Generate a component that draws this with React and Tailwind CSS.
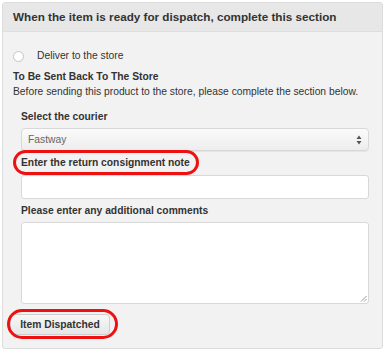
export default function App() {
  return (
    <div className="w-[385px] h-[351px] bg-white pt-[2px] pl-[2px]" style={{ fontFamily: '"Liberation Sans", Arial, sans-serif' }}>
      <div className="w-[381px] h-[347px] border border-[#dcdcdc] rounded-[3px] bg-[#f2f2f2] overflow-hidden flex flex-col">
        <div className="h-[29px] shrink-0 bg-[#e7e7e7] border-b border-[#dedede] flex items-center pl-[10px] text-[11.7px] font-bold text-[#333]">
          When the item is ready for dispatch, complete this section
        </div>
        <div className="flex flex-col pl-[10px] pr-[12px] text-[10.3px] text-[#333]">
          <div className="flex items-center mt-[17px] h-[14px]">
            <span className="w-[11px] h-[11px] rounded-full border border-[#c4c4c4] bg-white" />
            <span className="ml-[13px]">Deliver to the store</span>
          </div>
          <div className="font-bold mt-[7px] leading-[14px]">To Be Sent Back To The Store</div>
          <div className="leading-[14px] mt-[1px]">Before sending this product to the store, please complete the section below.</div>
          <div className="pl-[8px] flex flex-col">
            <div className="font-bold mt-[11px] leading-[14px]">Select the courier</div>
            <div className="mt-[4px] h-[23px] w-[348px] rounded-[4px] border border-[#d8d8d8] bg-gradient-to-b from-[#fbfbfb] to-[#ededed] shadow-[0_1px_1px_rgba(0,0,0,0.06)] flex items-center justify-between pl-[6px] pr-[6px] text-[#666]">
              <span>Fastway</span>
              <svg width="6" height="10" viewBox="0 0 6 10"><path d="M3 0.5 L5.5 4 H0.5 Z M3 9.5 L5.5 6 H0.5 Z" fill="#555" /></svg>
            </div>
            <div className="relative mt-[5px] leading-[14px] h-[14px]">
              <span className="font-bold">Enter the return consignment note</span>
              <div className="absolute left-[-8px] top-[-6px] w-[186px] h-[25px] rounded-full border-[3px] border-[#ee1111]" />
            </div>
            <div className="mt-[5px] h-[24px] w-[348px] rounded-[3px] border border-[#d8d8d8] bg-white" />
            <div className="font-bold mt-[5px] leading-[14px]">Please enter any additional comments</div>
            <div className="relative mt-[4px] h-[82px] w-[348px] rounded-[3px] border border-[#d8d8d8] bg-white">
              <svg className="absolute right-[1px] bottom-[1px]" width="7" height="7" viewBox="0 0 7 7"><path d="M6.5 1 L1 6.5 M6.5 4 L4 6.5" stroke="#999" strokeWidth="1" /></svg>
            </div>
          </div>
          <div className="relative mt-[10px] ml-[-3px] w-[100px]">
            <div className="h-[21px] rounded-[4px] border border-[#cfcfcf] bg-gradient-to-b from-[#f7f7f7] to-[#e6e6e6] flex items-center justify-center font-bold text-[#333]">
              Item Dispatched
            </div>
            <div className="absolute left-[-3px] top-[-5px] w-[111px] h-[30px] rounded-full border-[3px] border-[#ee1111]" />
          </div>
        </div>
      </div>
    </div>
  );
}
